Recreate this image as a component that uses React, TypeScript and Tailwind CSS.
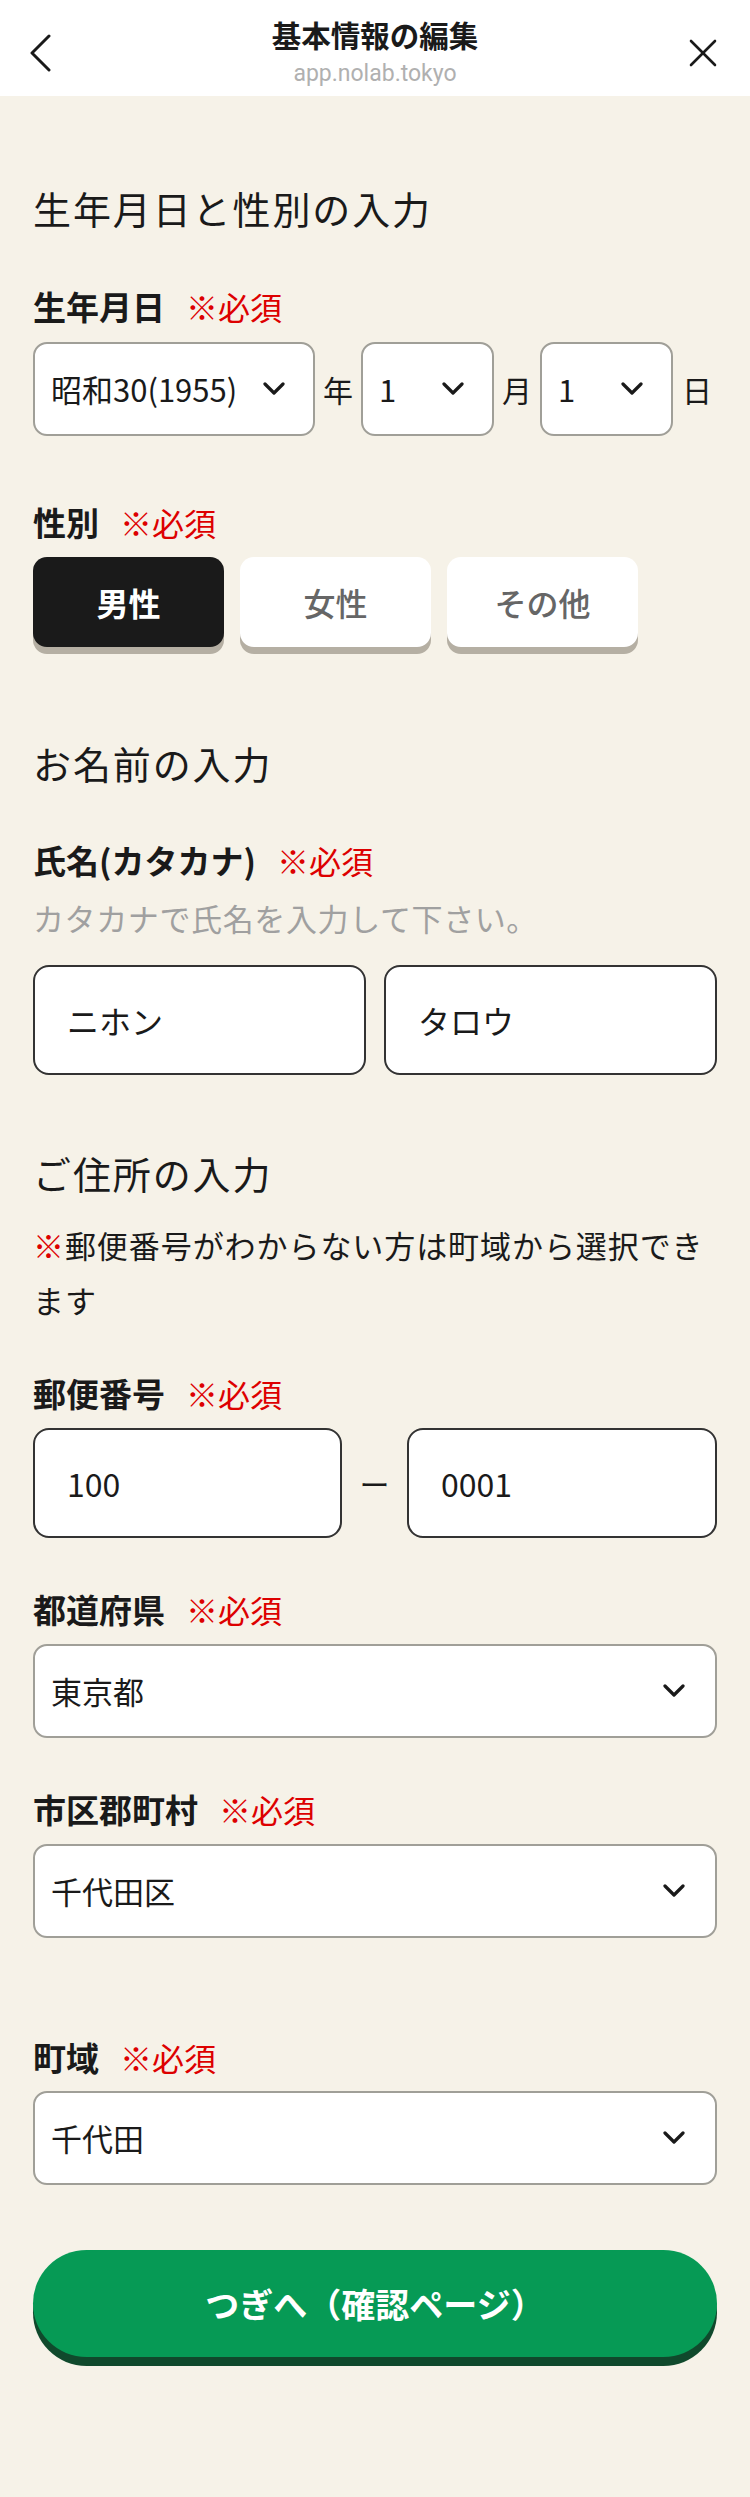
import type { ReactNode } from 'react'

const font = { fontFamily: '"Noto Sans CJK JP", "Noto Sans", sans-serif' }

function Chevron({ className = '' }: { className?: string }) {
	return (
		<svg
			width="22"
			height="14"
			viewBox="0 0 22 14"
			fill="none"
			stroke="#1a1a1a"
			strokeWidth="3.2"
			strokeLinecap="round"
			strokeLinejoin="round"
			className={className}
		>
			<polyline points="2,2 11,11 20,2" />
		</svg>
	)
}

function Required() {
	return <span className="ml-[21px] text-[32px] font-normal tracking-normal text-[#dd0000]">※必須</span>
}

function Label({ children, className = '' }: { children: ReactNode; className?: string }) {
	return (
		<div className={`flex h-[48px] items-center text-[33px] font-bold leading-[48px] ${className}`}>
			<span>{children}</span>
			<Required />
		</div>
	)
}

function SectionTitle({ children, className = '' }: { children: ReactNode; className?: string }) {
	return (
		<h2 className={`h-[56px] text-[38px] leading-[56px] tracking-[0.05em] ${className}`}>{children}</h2>
	)
}

function SelectBox({ value, className = '' }: { value: string; className?: string }) {
	return (
		<div
			className={`flex h-[94px] items-center justify-between rounded-[14px] border-2 border-[#a09f98] bg-white pl-[16px] pr-[28px] text-[31px] ${className}`}
		>
			<span>{value}</span>
			<Chevron />
		</div>
	)
}

function TextBox({ value, className = '' }: { value: string; className?: string }) {
	return (
		<div
			className={`flex h-[110px] items-center rounded-[16px] border-2 border-[#333] bg-white pl-[32px] text-[32px] ${className}`}
		>
			{value}
		</div>
	)
}

function GenderButton({ label, active }: { label: string; active?: boolean }) {
	return (
		<div
			className={`flex h-[90px] w-[191px] items-center justify-center rounded-[14px] text-[32px] shadow-[0_7px_0_#b5afa3] ${
				active ? 'bg-[#1a1a1a] font-bold text-white' : 'bg-white font-medium text-[#666]'
			}`}
		>
			{label}
		</div>
	)
}

export default function App() {
	return (
		<div className="min-h-[2497px] bg-[#f6f2e8] text-[#1a1a1a]" style={font}>
			<header className="grid h-[96px] grid-cols-[96px_1fr_96px] items-start bg-white">
				<div className="pl-[29px] pt-[34px]">
					<svg width="24" height="38" viewBox="0 0 24 38" fill="none" stroke="#1a1a1a" strokeWidth="3" strokeLinecap="round" strokeLinejoin="round">
						<polyline points="20,2 3,19 20,36" />
					</svg>
				</div>
				<div className="flex flex-col items-center pt-[14px]">
					<div className="text-[29.5px] font-bold leading-[40px]">基本情報の編集</div>
					<div
						className="mt-[4px] text-[23px] leading-[32px] text-[#b0b0b0]"
						style={{ fontFamily: 'Roboto, "Liberation Sans", sans-serif' }}
					>
						app.nolab.tokyo
					</div>
				</div>
				<div className="flex justify-end pr-[33px] pt-[39px]">
					<svg width="28" height="28" viewBox="0 0 28 28" fill="none" stroke="#1a1a1a" strokeWidth="2.6" strokeLinecap="round">
						<line x1="2" y1="2" x2="26" y2="26" />
						<line x1="26" y1="2" x2="2" y2="26" />
					</svg>
				</div>
			</header>

			<main className="px-[33px] pb-[130px] pt-[84px]">
				<SectionTitle>生年月日と性別の入力</SectionTitle>

				<Label className="mt-[46px]">生年月日</Label>
				<div className="mt-[12px] flex items-center text-[30px]">
					<SelectBox value="昭和30(1955)" className="w-[282px] pr-[24px]" />
					<span className="mx-[8px]">年</span>
					<SelectBox value="1" className="w-[133px]" />
					<span className="mx-[8px]">月</span>
					<SelectBox value="1" className="w-[133px]" />
					<span className="ml-[9px]">日</span>
				</div>

				<Label className="mt-[62px]">性別</Label>
				<div className="mt-[11px] flex gap-[16px]">
					<GenderButton label="男性" active />
					<GenderButton label="女性" />
					<GenderButton label="その他" />
				</div>

				<SectionTitle className="mt-[88px]">お名前の入力</SectionTitle>

				<Label className="mt-[45px]">氏名(カタカナ)</Label>
				<p className="mt-[10px] h-[48px] text-[31px] leading-[48px] tracking-[0.02em] text-[#a0a0a0]">
					カタカナで氏名を入力して下さい。
				</p>
				<div className="mt-[23px] grid grid-cols-2 gap-[18px]">
					<TextBox value="ニホン" />
					<TextBox value="タロウ" />
				</div>

				<SectionTitle className="mt-[70px]">ご住所の入力</SectionTitle>
				<p className="mt-[16px] text-[31px] leading-[55px] tracking-[0.03em]">
					<span className="text-[#dd0000]">※</span>郵便番号がわからない方は町域から選択できます
				</p>

				<Label className="mt-[42px]">郵便番号</Label>
				<div className="mt-[11px] flex items-center">
					<TextBox value="100" className="w-[309px]" />
					<span className="flex-1 text-center text-[30px]">ー</span>
					<TextBox value="0001" className="w-[310px]" />
				</div>

				<Label className="mt-[47px]">都道府県</Label>
				<SelectBox value="東京都" className="mt-[11px] pr-[30px]" />

				<Label className="mt-[47px]">市区郡町村</Label>
				<SelectBox value="千代田区" className="mt-[11px] pr-[30px]" />

				<Label className="mt-[95px]">町域</Label>
				<SelectBox value="千代田" className="mt-[10px] pr-[30px]" />

				<button className="mt-[65px] flex h-[107px] w-full items-center justify-center rounded-full bg-[#069a55] text-[34px] font-bold text-white shadow-[0_9px_0_#10492c]">
					つぎへ（確認ページ）
				</button>
			</main>
		</div>
	)
}
